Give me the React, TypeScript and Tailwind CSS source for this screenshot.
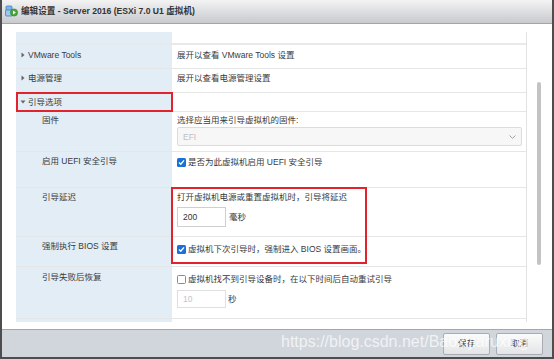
import React from "react";

const FONT = "font-['Liberation_Sans','Noto_Sans_CJK_SC',sans-serif]";

function VmIcon() {
  return (
    <svg width="13" height="13" viewBox="0 0 13 13">
      <rect x="1" y="1" width="6" height="5" rx="1" fill="#7fb6e6" stroke="#3d7fc1" strokeWidth="0.8" />
      <rect x="0.5" y="5" width="7" height="6" rx="1" fill="#9cc8ee" stroke="#3d7fc1" strokeWidth="0.8" />
      <circle cx="9" cy="7.5" r="3.6" fill="#45a83a" stroke="#2e7d27" strokeWidth="0.6" />
      <path d="M8 5.6 L10.8 7.5 L8 9.4 Z" fill="#ffffff" />
    </svg>
  );
}

function CaretRight() {
  return (
    <svg width="4" height="6" viewBox="0 0 4 6" className="shrink-0">
      <path d="M0.5 0.5 L3.5 3 L0.5 5.5 Z" fill="#666" />
    </svg>
  );
}

function CaretDown() {
  return (
    <svg width="6" height="4" viewBox="0 0 6 4" className="shrink-0">
      <path d="M0.5 0.5 L5.5 0.5 L3 3.5 Z" fill="#666" />
    </svg>
  );
}

function Check({ on }: { on: boolean }) {
  if (!on)
    return <div className="w-[9px] h-[9px] shrink-0 rounded-[1.5px] border border-[#8a8a8a] bg-white" />;
  return (
    <div className="w-[9px] h-[9px] shrink-0 rounded-[1.5px] bg-[#1a6fd8] flex items-center justify-center">
      <svg width="7" height="7" viewBox="0 0 7 7">
        <path d="M1 3.6 L2.8 5.3 L6 1.4" fill="none" stroke="#fff" strokeWidth="1.4" />
      </svg>
    </div>
  );
}

export default function App() {
  return (
    <div
      className={`w-[554px] h-[359px] flex flex-col bg-white border-x-2 border-b-2 border-[#4d4d4d] overflow-hidden text-[#3a3a3a] ${FONT}`}
    >
      {/* title bar */}
      <div className="h-[24px] shrink-0 flex items-center gap-[3px] pl-[3px] bg-gradient-to-b from-[#f3f3f4] to-[#c8cacd] border-b border-[#a3a5a9]">
        <VmIcon />
        <span className="text-[8.6px] font-bold text-[#333] leading-none">
          编辑设置 - Server 2016 (ESXi 7.0 U1 虚拟机)
        </span>
      </div>

      {/* content */}
      <div className="flex-1 flex pt-[8px] pl-[14px] text-[8.5px] leading-[14px]">
        <div className="relative w-[511px] self-start border-r border-[#e2e2e2]">
          {/* header */}
          <div className="flex h-[13px] border-b-2 border-[#e7e9eb]">
            <div className="w-[156px] bg-[#e2edf6]" />
            <div className="flex-1" />
          </div>
          {/* VMware Tools */}
          <div className="flex h-[24px] border-b border-[#e4e6e8]">
            <div className="w-[156px] bg-[#e2edf6] pl-[5px] pt-[3px] flex items-start gap-[3px]">
              <div className="h-[14px] flex items-center"><CaretRight /></div>
              <span>VMware Tools</span>
            </div>
            <div className="flex-1 pl-[5px] pt-[3px]">展开以查看 VMware Tools 设置</div>
          </div>
          {/* 电源管理 */}
          <div className="flex h-[24px] border-b border-[#e4e6e8]">
            <div className="w-[156px] bg-[#e2edf6] pl-[5px] pt-[2px] flex items-start gap-[3px]">
              <div className="h-[14px] flex items-center"><CaretRight /></div>
              <span>电源管理</span>
            </div>
            <div className="flex-1 pl-[5px] pt-[2px]">展开以查看电源管理设置</div>
          </div>
          {/* 引导选项 */}
          <div className="flex h-[19px] border-b border-[#e4e6e8]">
            <div className="w-[156px] bg-[#e2edf6] pl-[4px] pt-[2px] flex items-start gap-[2px]">
              <div className="h-[14px] flex items-center"><CaretDown /></div>
              <span>引导选项</span>
            </div>
            <div className="flex-1" />
          </div>
          {/* 固件 */}
          <div className="flex h-[40px] border-b border-[#e4e6e8]">
            <div className="w-[156px] bg-[#e2edf6] pl-[26px] pt-[1px]">固件</div>
            <div className="flex-1 pl-[5px] pt-[1px] flex flex-col">
              <span>选择应当用来引导虚拟机的固件:</span>
              <div className="w-[345px] h-[19px] border border-[#dcdcdc] rounded-[2px] bg-[#f7f7f7] flex items-center justify-between pl-[5px] pr-[5px]">
                <span className="text-[#c0c0c0]">EFI</span>
                <svg width="7" height="4" viewBox="0 0 7 4">
                  <path d="M0.5 0.5 L3.5 3.3 L6.5 0.5" fill="none" stroke="#9a9a9a" strokeWidth="0.9" />
                </svg>
              </div>
            </div>
          </div>
          {/* UEFI */}
          <div className="flex h-[36px] border-b border-[#e4e6e8]">
            <div className="w-[156px] bg-[#e2edf6] pl-[26px] pt-[2px]">启用 UEFI 安全引导</div>
            <div className="flex-1 pl-[5px] pt-[3px] flex items-start gap-[2px]">
              <div className="h-[14px] flex items-center"><Check on={true} /></div>
              <span>是否为此虚拟机启用 UEFI 安全引导</span>
            </div>
          </div>
          {/* 引导延迟 */}
          <div className="flex h-[49px] border-b border-[#e4e6e8]">
            <div className="w-[156px] bg-[#e2edf6] pl-[26px] pt-[2px]">引导延迟</div>
            <div className="flex-1 pl-[5px] pt-[2px] flex flex-col">
              <span>打开虚拟机电源或重置虚拟机时，引导将延迟</span>
              <div className="mt-[3px] flex items-center gap-[3px]">
                <div className="w-[49px] h-[20px] border border-[#cfcfcf] bg-white flex items-center pl-[5px] text-[#333]">200</div>
                <span>毫秒</span>
              </div>
            </div>
          </div>
          {/* BIOS */}
          <div className="flex h-[30px] border-b border-[#e4e6e8]">
            <div className="w-[156px] bg-[#e2edf6] pl-[26px] pt-[2px]">强制执行 BIOS 设置</div>
            <div className="flex-1 pl-[5px] pt-[5px] flex items-start gap-[2px]">
              <div className="h-[14px] flex items-center"><Check on={true} /></div>
              <span>虚拟机下次引导时，强制进入 BIOS 设置画面。</span>
            </div>
          </div>
          {/* 引导失败后恢复 */}
          <div className="flex h-[52px] border-b border-[#e4e6e8]">
            <div className="w-[156px] bg-[#e2edf6] pl-[26px] pt-[3px]">引导失败后恢复</div>
            <div className="flex-1 pl-[5px] pt-[5px] flex flex-col">
              <div className="flex items-start gap-[2px]">
                <div className="h-[14px] flex items-center"><Check on={false} /></div>
                <span>虚拟机找不到引导设备时，在以下时间后自动重试引导</span>
              </div>
              <div className="mt-[4px] flex items-center gap-[2px]">
                <div className="w-[49px] h-[18px] border border-[#e0e0e0] bg-white flex items-center pl-[5px] text-[#c4c4c4]">10</div>
                <span>秒</span>
              </div>
            </div>
          </div>
          {/* filler */}
          <div className="flex h-[3px]">
            <div className="w-[156px] bg-[#e2edf6]" />
          </div>

          {/* red annotation boxes */}
          <div className="absolute left-0 top-[60px] w-[157px] h-[20px] border-2 border-[#e3232b]" />
          <div className="absolute left-[155px] top-[155px] w-[196px] h-[77px] border-2 border-[#e3232b]" />
        </div>
        {/* scrollbar thumb */}
        <div className="ml-[10px] mt-[50px] w-[4px] h-[183px] rounded-full bg-[#c3c3c3]" />
      </div>

      {/* footer */}
      <div className="relative h-[28px] shrink-0 bg-[#d1d6dd] border-t border-[#a2a7ae] flex items-center justify-end gap-[6px] pr-[9px] text-[8.5px]">
        <div className="w-[47px] h-[22px] rounded-[2px] border border-[#a9adb3] bg-gradient-to-b from-[#fbfbfb] to-[#e2e4e7] flex items-center justify-center text-[#333]">
          保存
        </div>
        <div className="w-[47px] h-[22px] rounded-[2px] border border-[#a9adb3] bg-gradient-to-b from-[#fbfbfb] to-[#e2e4e7] flex items-center justify-center text-[#333]">
          取消
        </div>
        <span className="absolute left-[279px] top-[2px] text-[16px] leading-[20px] text-white/70 font-['Liberation_Sans',sans-serif] whitespace-nowrap">
          https://blog.csdn.net/Baoxijiaruxing
        </span>
      </div>
    </div>
  );
}
